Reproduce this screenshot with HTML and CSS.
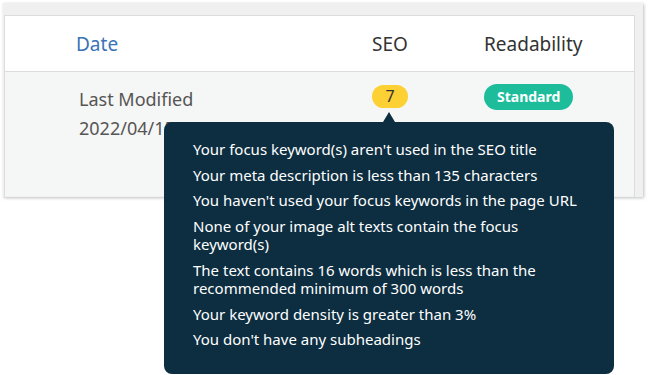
FILE: index.html
```html
<!DOCTYPE html>
<html lang="en">
<head>
  <meta charset="UTF-8">
  <title>Posts - SEO</title>
  <link rel="stylesheet" href="styles.css">
</head>
<body>

  <div class="panel">
    <div class="posts-table">
      <div class="row head">
        <div class="cell"></div>
        <div class="cell"><a href="#" class="sort-link">Date</a></div>
        <div class="cell">SEO</div>
        <div class="cell">Readability</div>
      </div>
      <div class="row item">
        <div class="cell"></div>
        <div class="cell date-cell">
          <div>Last Modified</div>
          <div>2022/04/15 at 9:34 am</div>
        </div>
        <div class="cell seo-cell">
          <span class="score-badge">7</span>
          <div class="tip">
            <ul>
              <li>Your focus keyword(s) aren't used in the SEO title</li>
              <li>Your meta description is less than 135 characters</li>
              <li>You haven't used your focus keywords in the page URL</li>
              <li>None of your image alt texts contain the focus keyword(s)</li>
              <li>The text contains 16 words which is less than the recommended minimum of 300 words</li>
              <li>Your keyword density is greater than 3%</li>
              <li>You don't have any subheadings</li>
            </ul>
          </div>
        </div>
        <div class="cell">
          <span class="read-badge">Standard</span>
        </div>
      </div>
    </div>
  </div>

</body>
</html>
```

FILE: styles.css
```css
html, body {
  min-height: 375px;
}

body {
  margin: 0;
  background: #fff;
  font-family: "Noto Sans", "Open Sans", sans-serif;
  color: #333;
}

.panel {
  margin: 3px 5px 0 3px;
  height: 194px;
  background: #f0f0f0;
  box-shadow: 1px 1px 3px rgba(0, 0, 0, 0.25);
  padding: 12px 8px 0 1px;
  box-sizing: border-box;
}

.posts-table {
  height: 100%;
  border: 1px solid #dcdcdc;
  border-bottom: none;
}

.row {
  display: grid;
  grid-template-columns: 71px 296px 112px 1fr;
}

.row.head {
  height: 55px;
  background: #fff;
  border-bottom: 1px solid #dcdcdc;
  align-items: center;
  font-size: 19px;
  color: #333;
}

.sort-link {
  color: #3a74b5;
  text-decoration: none;
}

.row.item {
  background: #f5f6f6;
  height: 124px;
  padding-top: 13px;
  box-sizing: border-box;
}

.date-cell {
  padding-left: 3px;
  font-size: 18px;
  line-height: 29px;
  color: #555;
}

.seo-cell {
  position: relative;
}

.score-badge {
  display: inline-block;
  margin-top: -3px;
  width: 36px;
  height: 23px;
  line-height: 23px;
  border-radius: 12px;
  background: #fdd033;
  text-align: center;
  font-size: 16px;
  color: #333;
}

.read-badge {
  display: inline-block;
  margin-top: -3px;
  padding: 0 13px;
  height: 26px;
  line-height: 26px;
  border-radius: 13px;
  background: #1dbd9c;
  color: #fff;
  font-weight: bold;
  font-size: 14px;
}

.tip {
  position: absolute;
  top: 37px;
  left: -208px;
  width: 450px;
  height: 252px;
  box-sizing: border-box;
  padding: 18px 28px 0 29px;
  background: #0d2e40;
  border-radius: 8px;
  color: #fff;
  font-size: 15px;
  line-height: 18.5px;
  z-index: 2;
}

.tip::before {
  content: "";
  position: absolute;
  top: -10px;
  left: 219px;
  border-left: 6px solid transparent;
  border-right: 6px solid transparent;
  border-bottom: 10px solid #0d2e40;
}

.tip ul {
  list-style: none;
  margin: 0;
  padding: 0;
}

.tip li {
  margin-bottom: 7px;
}
```
